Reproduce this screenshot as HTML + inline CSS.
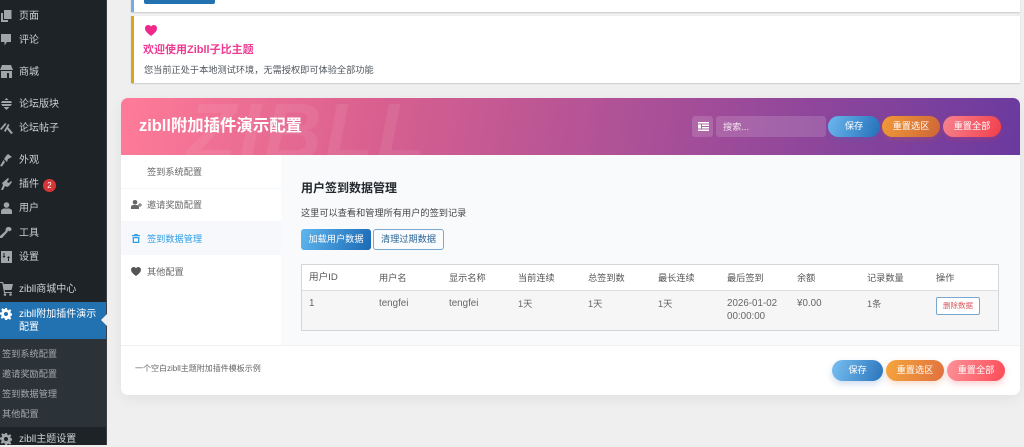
<!DOCTYPE html>
<html lang="zh"><head><meta charset="utf-8"><title>zibll</title>
<style>
*{box-sizing:border-box}
html,body{margin:0;padding:0;background:#efefef}
body{width:1024px;height:445px;overflow:hidden;position:relative;font-family:"Liberation Sans","Noto Sans CJK SC",sans-serif;color:#444;filter:blur(.3px)}
.t{position:absolute;white-space:nowrap;line-height:14px;height:14px}
.box{position:absolute}
.m{color:#ccd0d4;font-size:10px;left:19px}
.s{color:#a4a9ad;font-size:9.2px;left:2px}
.ic{position:absolute;fill:#a0a5aa}
.n{font-size:9.2px;left:147px;color:#666}
.th{font-size:9.2px;color:#555;top:271px}
.td{font-size:9.8px;color:#666;top:297px}
.b{position:absolute;height:21px;border-radius:11px;color:#fff;font-size:9.2px;line-height:21px;text-align:center}
</style></head><body>
<!-- sidebar -->
<div class="box" style="left:0;top:0;width:107px;height:445px;background:#1d2327;border-right:1px solid #3a4045"></div>
<div class="box" style="left:0;top:339px;width:106px;height:88px;background:#2c3338"></div>
<div class="box" style="left:0;top:302px;width:106px;height:37px;background:#2271b1"></div>
<div class="box" style="left:101px;top:314px;width:0;height:0;border:6px solid transparent;border-right-color:#f0f0f1;border-left:0"></div>
<svg class="ic" style="left:1px;top:10px" width="11" height="12" viewBox="0 0 11 12"><path d="M3 0h7.500v9H3zM0 3h2v7h5v2H0z"/></svg>
<svg class="ic" style="left:1px;top:34px" width="11" height="12" viewBox="0 0 11 12"><path d="M0 0h10v8H6l-2.500 3.500V8H0z"/></svg>
<svg class="ic" style="left:0;top:65px" width="13" height="13" viewBox="0 0 13 13"><path d="M2 0h9l2 5H0zM1 6h11v7H9V8H7v5H1z"/></svg>
<svg class="ic" style="left:1px;top:98px" width="11" height="12" viewBox="0 0 11 12"><path d="M5.500 0l2 2h-4zM1 3h9l1 2H0zM0 6h11L9.500 8h-8zM2.500 9h6l-3 3z"/></svg>
<svg class="ic" style="left:0;top:122px" width="13" height="12" viewBox="0 0 13 12"><path d="M0 7l5-6 1.500 1-5 6zM4 9l4-7 1.500 1-4 7zM8 5l5 6-2 1-4-5z"/></svg>
<svg class="ic" style="left:0;top:154px" width="12" height="13" viewBox="0 0 12 13"><path d="M6 2l2-2 4 3-4 2-1 3-3-3zM3.500 6L5 8l-3 4.500L0 12z"/></svg>
<svg class="ic" style="left:1px;top:178px" width="11" height="13" viewBox="0 0 11 13"><path d="M7 0l1 1-2 3 2 1 2-2 1 1-3 4-2 1-2-1-2 4H0l2-5-1-2z"/></svg>
<svg class="ic" style="left:1px;top:202px" width="11" height="12" viewBox="0 0 11 12"><circle cx="5.500" cy="3" r="2.800"/><path d="M0 12V9c0-1.500 2-2.500 3.500-2.500h4C9 6.500 11 7.500 11 9v3z"/></svg>
<svg class="ic" style="left:0;top:227px" width="12" height="12" viewBox="0 0 12 12"><path d="M8 0c2-.3 4 1 3.500 3L9.500 4.500 8 3.500 7.500 5 2 11H0v-2l5.500-5C5.500 2 6 .3 8 0z"/></svg>
<svg class="ic" style="left:1px;top:251px" width="11" height="12" viewBox="0 0 11 12"><path fill-rule="evenodd" d="M0 0h11v12H0zM2.500 2v3H1.500l1.500 2 1.500-2h-1V2zM7 10V7H6l1.500-2L9 7H8v3z"/></svg>
<svg class="ic" style="left:0;top:282px" width="13" height="14" viewBox="0 0 13 14"><path d="M0 0h3l.8 2H13l-1.500 6H4.500l.5 2h7v1H4L2.300 1H0z"/><circle cx="5" cy="12.500" r="1.300"/><circle cx="10.500" cy="12.500" r="1.300"/></svg>
<svg class="ic" style="left:0;top:308px;fill:#fff" width="12" height="12" viewBox="0 0 12 12"><path fill-rule="evenodd" d="M5 0h2l.3 1.700 1.200.5L10 1.200l1.300 1.300-1 1.500.5 1.200 1.700.3v2l-1.700.3-.5 1.200 1 1.500-1.300 1.300-1.500-1-1.200.5L7 12H5l-.3-1.700-1.200-.5-1.500 1L.7 9.500l1-1.500-.5-1.200L0 6.500v-2l1.700-.3.500-1.200-1-1.500L2.500.2l1.500 1 1.200-.5zM6 4a2 2 0 100 4 2 2 0 000-4z"/></svg>
<svg class="ic" style="left:0;top:433px" width="12" height="12" viewBox="0 0 12 12"><path fill-rule="evenodd" d="M5 0h2l.3 1.700 1.200.5L10 1.200l1.300 1.300-1 1.500.5 1.200 1.700.3v2l-1.700.3-.5 1.200 1 1.500-1.300 1.300-1.500-1-1.200.5L7 12H5l-.3-1.700-1.200-.5-1.500 1L.7 9.500l1-1.500-.5-1.200L0 6.500v-2l1.700-.3.500-1.200-1-1.500L2.500.2l1.500 1 1.200-.5zM6 4a2 2 0 100 4 2 2 0 000-4z"/></svg>
<div class="t m" style="top:10px">页面</div>
<div class="t m" style="top:34px">评论</div>
<div class="t m" style="top:66px">商城</div>
<div class="t m" style="top:98px">论坛版块</div>
<div class="t m" style="top:122px">论坛帖子</div>
<div class="t m" style="top:154px">外观</div>
<div class="t m" style="top:178px">插件</div>
<div class="box" style="left:43px;top:179px;width:13px;height:13px;border-radius:50%;background:#d63638;color:#fff;font-size:8px;line-height:13px;text-align:center">2</div>
<div class="t m" style="top:202px">用户</div>
<div class="t m" style="top:227px">工具</div>
<div class="t m" style="top:251px">设置</div>
<div class="t m" style="top:283px">zibll商城中心</div>
<div class="t m" style="top:308px;color:#fff">zibll附加插件演示</div>
<div class="t m" style="top:321px;color:#fff">配置</div>
<div class="t s" style="top:346.500px">签到系统配置</div>
<div class="t s" style="top:366.500px">邀请奖励配置</div>
<div class="t s" style="top:386.500px">签到数据管理</div>
<div class="t s" style="top:406.500px">其他配置</div>
<div class="t m" style="top:433px">zibll主题设置</div>
<!-- notices -->
<div class="box" style="left:131px;top:-5px;width:889px;height:17px;background:#fff;border-left:3px solid #72aee6;box-shadow:0 1px 1px rgba(0,0,0,.15)"></div>
<div class="box" style="left:144px;top:-5px;width:71px;height:9px;background:#2271b1;border-radius:2px"></div>
<div class="box" style="left:131px;top:16px;width:889px;height:67px;background:#fff;border-left:3px solid #dba617;box-shadow:0 1px 1px rgba(0,0,0,.15)"></div>
<svg class="box" style="left:145px;top:25px" width="12" height="11" viewBox="0 0 12 11"><path fill="#f1288c" d="M6 11C2 8 0 6 0 3.300 0 1.400 1.400 0 3.200 0 4.300 0 5.400.6 6 1.500 6.600.6 7.700 0 8.800 0 10.600 0 12 1.400 12 3.300 12 6 10 8 6 11z"/></svg>
<div class="t" style="left:143px;top:42.500px;font-size:11px;font-weight:bold;color:#ee3a92">欢迎使用Zibll子比主题</div>
<div class="t" style="left:144px;top:63px;font-size:9.200px;color:#50575e">您当前正处于本地测试环境，无需授权即可体验全部功能</div>
<!-- card -->
<div class="box" style="left:121px;top:98px;width:899px;height:297px;background:#fff;border-radius:7px;box-shadow:0 4px 14px rgba(0,0,0,.06);overflow:hidden">
 <div class="box" style="left:0;top:0;width:899px;height:57px;background:linear-gradient(100deg,#ff7b98 0%,#d9608f 28%,#a84f98 60%,#6a3a9f 100%);overflow:hidden">
  <div class="t" style="left:66px;top:-11px;height:90px;line-height:90px;font-size:80px;font-weight:bold;font-style:italic;color:rgba(255,255,255,.07);letter-spacing:3px">ZIBLL</div>
 </div>
 <div class="box" style="left:160px;top:57px;width:739px;height:190px;background:#f9fafc"></div>
 <div class="box" style="left:0;top:90px;width:160px;height:1px;background:#f6f7f9"></div>
 <div class="box" style="left:0;top:123px;width:160px;height:34px;background:#f6f8fb"></div>
 <div class="box" style="left:0;top:247px;width:899px;height:1px;background:#f0f1f3"></div>
</div>
<div class="t" style="left:139px;top:117px;height:18px;line-height:18px;font-size:16.400px;font-weight:bold;color:#fff">zibll附加插件演示配置</div>
<div class="box" style="left:692px;top:116px;width:21px;height:21px;border-radius:3px;background:rgba(255,255,255,.15)"></div>
<svg class="box" style="left:698px;top:122px" width="11" height="9" viewBox="0 0 11 9"><path fill="#fff" d="M0 0h11v1.500H0zM4 2.500h7V4H4zM4 5h7v1.500H4zM0 7.500h11V9H0zM0 2.500h3v4H0z"/></svg>
<div class="box" style="left:716px;top:116px;width:110px;height:21px;border-radius:3px;background:rgba(255,255,255,.15)"></div>
<div class="t" style="left:723px;top:120px;font-size:9.200px;color:#f3e4ef">搜索...</div>
<div class="b" style="left:828px;top:116px;width:52px;background:linear-gradient(110deg,#6cb7ee,#2470ba);box-shadow:0 2px 6px rgba(60,110,190,.3)">保存</div>
<div class="b" style="left:882px;top:116px;width:58px;background:linear-gradient(110deg,#f09a38,#cf6637);box-shadow:0 2px 6px rgba(200,100,50,.3)">重置选区</div>
<div class="b" style="left:943px;top:116px;width:58px;background:linear-gradient(110deg,#f6838e,#f23f4b);box-shadow:0 2px 6px rgba(230,60,80,.3)">重置全部</div>
<!-- nav -->
<div class="t n" style="top:165px">签到系统配置</div>
<svg class="box" style="left:131px;top:200px" width="11" height="9" viewBox="0 0 11 9"><circle cx="4" cy="2.300" r="2.300" fill="#666"/><path fill="#666" d="M0 9V7c0-1.200 1.200-2 2.500-2h3C6.800 5 8 5.800 8 7v2zM8.500 3h1v1.500H11v1H9.500V7h-1V5.500H7v-1h1.500z"/></svg>
<div class="t n" style="top:198px">邀请奖励配置</div>
<svg class="box" style="left:132px;top:234px" width="8" height="9" viewBox="0 0 8 9"><path fill="#2f9ee5" fill-rule="evenodd" d="M2.500 0h3l.5 1h2v1.200H0V1h2zM.7 3h6.600v6H.7zM2 4.200v3.600h4V4.200z"/></svg>
<div class="t n" style="top:232px;color:#2f9ee5">签到数据管理</div>
<svg class="box" style="left:131px;top:267px" width="10" height="9" viewBox="0 0 12 11"><path fill="#555" d="M6 11C2 8 0 6 0 3.300 0 1.400 1.400 0 3.200 0 4.300 0 5.400.6 6 1.500 6.600.6 7.700 0 8.800 0 10.600 0 12 1.400 12 3.300 12 6 10 8 6 11z"/></svg>
<div class="t n" style="top:265px">其他配置</div>
<!-- content -->
<div class="t" style="left:301px;top:181px;font-size:12px;font-weight:bold;color:#23282d">用户签到数据管理</div>
<div class="t" style="left:301px;top:206px;font-size:9.200px;color:#444">这里可以查看和管理所有用户的签到记录</div>
<div class="box" style="left:301px;top:229px;width:70px;height:21px;border-radius:3px;background:linear-gradient(110deg,#5fb6ee,#1a69b5);color:#fff;font-size:9.200px;line-height:21px;text-align:center">加载用户数据</div>
<div class="box" style="left:373px;top:229px;width:71px;height:21px;border-radius:3px;background:#f9fbfd;border:1px solid #7aa7cf;color:#2a6496;font-size:9.200px;line-height:19px;text-align:center">清理过期数据</div>
<div class="box" style="left:301px;top:264px;width:698px;height:67px;background:#fff;border:1px solid #d4d6d9"></div>
<div class="box" style="left:302px;top:290px;width:696px;height:40px;background:#f6f6f7;border-top:1px solid #dcdde0"></div>
<div class="t th" style="left:309px;font-size:9.600px">用户ID</div>
<div class="t th" style="left:379px">用户名</div>
<div class="t th" style="left:449px">显示名称</div>
<div class="t th" style="left:518px">当前连续</div>
<div class="t th" style="left:588px">总签到数</div>
<div class="t th" style="left:658px">最长连续</div>
<div class="t th" style="left:727px">最后签到</div>
<div class="t th" style="left:797px">余额</div>
<div class="t th" style="left:867px">记录数量</div>
<div class="t th" style="left:936px">操作</div>
<div class="t td" style="left:309px">1</div>
<div class="t td" style="left:379px">tengfei</div>
<div class="t td" style="left:449px">tengfei</div>
<div class="t td" style="left:518px;font-size:9.200px">1天</div>
<div class="t td" style="left:588px;font-size:9.200px">1天</div>
<div class="t td" style="left:658px;font-size:9.200px">1天</div>
<div class="t td" style="left:727px">2026-01-02</div>
<div class="t td" style="left:727px;top:310px">00:00:00</div>
<div class="t td" style="left:797px">¥0.00</div>
<div class="t td" style="left:867px;font-size:9.200px">1条</div>
<div class="box" style="left:936px;top:297px;width:44px;height:18px;border-radius:2px;background:#fff;border:1px solid #7aa7cf;color:#d9575f;font-size:7.500px;line-height:16px;text-align:center">删除数据</div>
<!-- footer -->
<div class="t" style="left:135px;top:362px;font-size:8px;color:#666">一个空白zibll主题附加插件模板示例</div>
<div class="b" style="left:832px;top:360px;width:51px;background:linear-gradient(110deg,#78c0f2,#2a74bb);box-shadow:0 3px 7px rgba(60,120,200,.25)">保存</div>
<div class="b" style="left:886px;top:360px;width:58px;background:linear-gradient(110deg,#f5a63c,#e07040);box-shadow:0 3px 7px rgba(220,120,50,.25)">重置选区</div>
<div class="b" style="left:947px;top:360px;width:58px;background:linear-gradient(110deg,#fd9299,#fb4b56);box-shadow:0 3px 7px rgba(240,70,80,.25)">重置全部</div>
</body></html>
